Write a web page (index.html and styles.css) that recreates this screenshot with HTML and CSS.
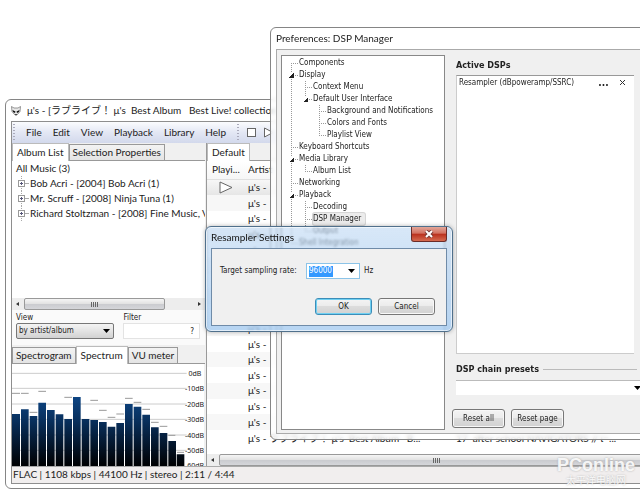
FILE: index.html
```html
<!DOCTYPE html>
<html lang="en">
<head>
    <meta charset="UTF-8">
    <meta name="viewport" content="width=device-width, initial-scale=1.0">
    <title>Preferences: DSP Manager</title>
    <link rel="stylesheet" href="styles.css">
</head>
<body>
    <main class="desktop">

        <!-- Player window -->
        <section class="window player">
            <header class="titlebar">
                <svg class="logo" viewBox="0 0 20 20">
                    <path d="M1 1 L6 4 L14 4 L19 1 L18 11 L12 18 L8 18 L2 11 Z" fill="#e8e8e8" stroke="#777" stroke-width="1.5"/>
                    <path d="M3 8 L9 11 L8 14 L4 12 Z M17 8 L11 11 L12 14 L16 12 Z M8 16 L12 16 L10 19 Z" fill="#111"/>
                </svg>
                <h1>μ's - [ラブライブ！ μ's&nbsp; Best Album&nbsp;&nbsp; Best Live! collection</h1>
            </header>
            <div class="frame">
                <nav class="menubar">
                    <i class="grip"></i>
                    <button>File</button>
                    <button>Edit</button>
                    <button>View</button>
                    <button>Playback</button>
                    <button>Library</button>
                    <button>Help</button>
                    <i class="grip"></i>
                    <div class="transport">
                        <button aria-label="Stop"><svg width="11" height="11" viewBox="0 0 11 11"><rect x="1.5" y="1.5" width="8" height="8" fill="#fff" stroke="#666"/></svg></button>
                        <button aria-label="Play"><svg width="11" height="11" viewBox="0 0 11 11"><path d="M1.5 1 L10 5.5 L1.5 10 Z" fill="#fff" stroke="#666"/></svg></button>
                    </div>
                </nav>
                <div class="panes">
                    <div class="side">
                        <div class="tabs">
                            <button class="tab active">Album List</button>
                            <button class="tab">Selection Properties</button>
                        </div>
                        <div class="albums">
                            <div>All Music (3)</div>
                            <ul>
                                <li>Bob Acri - [2004] Bob Acri (1)</li>
                                <li>Mr. Scruff - [2008] Ninja Tuna (1)</li>
                                <li>Richard Stoltzman - [2008] Fine Music, V</li>
                            </ul>
                        </div>
                        <div class="scrollbar side-scroll">
                            <svg viewBox="0 0 12 12"><path d="M7 4 L7 8 L4 6 Z"/></svg>
                            <div class="thumb"><i></i></div>
                            <svg viewBox="0 0 12 12"><path d="M5 4 L5 8 L8 6 Z"/></svg>
                        </div>
                        <div class="filters">
                            <div class="field">
                                <label for="view">View</label>
                                <select id="view"><option>by artist/album</option></select>
                            </div>
                            <div class="field">
                                <label for="filter">Filter</label>
                                <input id="filter" type="text" value="?">
                            </div>
                        </div>
                        <div class="tabs lower">
                            <button class="tab">Spectrogram</button>
                            <button class="tab active">Spectrum</button>
                            <button class="tab">VU meter</button>
                        </div>
                        <svg class="spectrum" viewBox="0 0 576 306">
                            <defs>
                                <linearGradient id="bar" gradientUnits="userSpaceOnUse" x1="0" y1="90" x2="0" y2="300">
                                    <stop offset="0" stop-color="#0d4788"/>
                                    <stop offset="0.4" stop-color="#082e5a"/>
                                    <stop offset="1" stop-color="#000205"/>
                                </linearGradient>
                            </defs>
                            <path d="M0 28H524M0 73H524M0 120H524M0 166H524M0 213H524M0 259H524" stroke="#ccc" stroke-width="3"/>
                            <path d="M0 88H24M27 88H50M53 145H76M79 82H102M157 100H180M235 109H258M261 139H284M287 160H310M313 150H336M339 103H362M365 115H388M391 136H414M417 175H440M443 187H466M469 214H490M495 265H516" stroke="#999" stroke-width="3"/>
                            <path fill="url(#bar)" d="M0 150h24V306H0zM27 136h23V306h-23zM53 156h23V306h-23zM79 116h23V306h-23zM105 138h23V306h-23zM131 151h23V306h-23zM157 165h23V306h-23zM183 99h23V306h-23zM209 165h23V306h-23zM235 168h23V306h-23zM261 174h23V306h-23zM287 188h23V306h-23zM313 177h23V306h-23zM339 120h23V306h-23zM365 128h23V306h-23zM391 152h23V306h-23zM417 190h23V306h-23zM443 207h23V306h-23zM469 231h23V306h-23zM494 271h23V306h-23z"/>
                            <g class="scale">
                                <text x="568" y="36">0dB</text>
                                <text x="576" y="81">-10dB</text>
                                <text x="576" y="128">-20dB</text>
                                <text x="576" y="174">-30dB</text>
                                <text x="576" y="221">-40dB</text>
                                <text x="576" y="267">-50dB</text>
                                <text x="576" y="313">-60dB</text>
                            </g>
                        </svg>
                    </div>

                    <div class="playlist">
                        <div class="tabs">
                            <button class="tab active">Default</button>
                        </div>
                        <div class="rows">
                            <table>
                                <thead>
                                    <tr><th class="state">Playi...</th><th class="artist">Artist</th><th></th></tr>
                                </thead>
                                <tbody>
                                    <tr class="current"><td class="state"><svg width="14" height="13" viewBox="0 0 14 13"><path d="M1 1 L13 6.5 L1 12 Z" fill="#fff" stroke="#666"/></svg></td><td>μ's -</td><td></td></tr>
                                    <tr><td></td><td>μ's -</td><td></td></tr>
                                    <tr><td></td><td>μ's -</td><td></td></tr>
                                    <tr><td></td><td>μ's -</td><td></td></tr>
                                    <tr><td></td><td>μ's -</td><td></td></tr>
                                    <tr><td></td><td>μ's -</td><td></td></tr>
                                    <tr><td></td><td>μ's -</td><td></td></tr>
                                    <tr><td></td><td>μ's -</td><td></td></tr>
                                    <tr><td></td><td>μ's -</td><td></td></tr>
                                    <tr><td></td><td>μ's -</td><td></td></tr>
                                    <tr><td></td><td>μ's -</td><td></td></tr>
                                    <tr><td></td><td>μ's -</td><td></td></tr>
                                    <tr><td></td><td>μ's -</td><td></td></tr>
                                    <tr><td></td><td>μ's -</td><td></td></tr>
                                    <tr><td></td><td>μ's -</td><td></td></tr>
                                    <tr><td></td><td>μ's -</td><td></td></tr>
                                    <tr><td></td><td>μ's - ラブライブ！ μ's&nbsp; Best Album&nbsp;&nbsp; B...</td><td>17&nbsp; after school NAVIGATORS // ί=...</td></tr>
                                </tbody>
                            </table>
                        </div>
                        <div class="scrollbar">
                            <svg viewBox="0 0 12 12"><path d="M7 4 L7 8 L4 6 Z"/></svg>
                            <div class="thumb"><i></i></div>
                        </div>
                    </div>
                </div>
                <footer class="status">FLAC | 1108 kbps | 44100 Hz | stereo | 2:11 / 4:44</footer>
            </div>
        </section>

        <!-- Preferences window -->
        <section class="window prefs">
            <header class="titlebar"><h2>Preferences: DSP Manager</h2></header>
            <div class="client">
                <div class="tree">
                    <ul>
                        <li><span>Components</span></li>
                        <li class="open"><span>Display</span>
                            <ul>
                                <li><span>Context Menu</span></li>
                                <li class="open"><span>Default User Interface</span>
                                    <ul>
                                        <li><span>Background and Notifications</span></li>
                                        <li><span>Colors and Fonts</span></li>
                                        <li><span>Playlist View</span></li>
                                    </ul>
                                </li>
                            </ul>
                        </li>
                        <li><span>Keyboard Shortcuts</span></li>
                        <li class="open"><span>Media Library</span>
                            <ul>
                                <li><span>Album List</span></li>
                            </ul>
                        </li>
                        <li><span>Networking</span></li>
                        <li class="open"><span>Playback</span>
                            <ul>
                                <li><span>Decoding</span></li>
                                <li><span class="selected">DSP Manager</span></li>
                                <li><span>Output</span></li>
                            </ul>
                        </li>
                        <li><span>Shell Integration</span></li>
                    </ul>
                </div>
                <div class="page">
                    <h3>Active DSPs</h3>
                    <div class="dsps">
                        <div class="dsp">
                            <span>Resampler (dBpoweramp/SSRC)</span>
                            <button aria-label="Configure">...</button>
                            <button aria-label="Remove"><svg width="7" height="7" viewBox="0 0 7 7"><path d="M1 1 L6 6 M6 1 L1 6" stroke="#333" fill="none"/></svg></button>
                        </div>
                    </div>
                    <h3 class="ruled"><label for="preset">DSP chain presets</label></h3>
                    <select id="preset"><option></option></select>
                    <div class="buttons">
                        <button class="push">Reset all</button>
                        <button class="push">Reset page</button>
                    </div>
                </div>
            </div>
        </section>

        <!-- Resampler dialog -->
        <section class="window dialog">
            <header class="titlebar">
                <h2>Resampler Settings</h2>
                <button class="close" aria-label="Close"><svg width="10" height="8" viewBox="0 0 10 8"><path d="M2 1 L8 7 M8 1 L2 7" stroke="#7a3a35" stroke-width="4"/><path d="M2 1 L8 7 M8 1 L2 7" stroke="#fff" stroke-width="2"/></svg></button>
            </header>
            <form class="client">
                <div class="rate">
                    <label for="rate">Target sampling rate:</label>
                    <div class="combo">
                        <input id="rate" type="text" value="96000">
                        <button type="button" aria-label="Show rates"><svg width="7" height="4" viewBox="0 0 7 4"><path d="M0 0 H7 L3.5 4 Z"/></svg></button>
                    </div>
                    <span>Hz</span>
                </div>
                <div class="actions">
                    <button type="button" class="push default">OK</button>
                    <button type="button" class="push">Cancel</button>
                </div>
            </form>
        </section>

        <div class="watermark">
            <strong>PConline</strong>
            <span>太平洋电脑网</span>
        </div>
    </main>
</body>
</html>
```
FILE: styles.css
```css
* {
    box-sizing: border-box;
}
body {
    margin: 0;
    background: #fff;
    color: #222;
    font-family: Lato, "Noto Sans CJK JP", sans-serif;
    font-size: 10px;
    line-height: 15px;
}
h1, h2, h3, ul {
    margin: 0;
    padding: 0;
    font-size: inherit;
    font-weight: normal;
    list-style: none;
}
button, input, select {
    margin: 0;
    padding: 0;
    border: none;
    background: none;
    color: inherit;
    font: inherit;
}
select {
    appearance: none;
}
.desktop {
    position: relative;
    height: 100vh;
    overflow: hidden;
}
.window {
    position: absolute;
    display: flex;
    flex-direction: column;
    border: 1px solid #858585;
    border-radius: 6px;
}
.titlebar {
    display: flex;
    align-items: center;
    height: 21px;
    white-space: nowrap;
}

/* Player */
.player {
    top: 99px;
    left: 5px;
    right: -20px;
    bottom: 0;
    padding: 0 5px 4px;
    background: #fff;
}
.logo {
    width: 10px;
    height: 10px;
    margin-right: 6px;
}
.frame {
    flex: 1;
    display: flex;
    flex-direction: column;
    min-height: 0;
    border: 1px solid #8e8e8e;
    background: #f0f0f0;
}
.menubar {
    display: flex;
    align-items: center;
    gap: 11px;
    height: 21px;
    padding-left: 1px;
    background: linear-gradient(#fbfcfe, #e3e7f4 50%, #d3d9ec);
}
.menubar button {
    line-height: 15px;
}
.menubar button svg {
    display: block;
}
.transport {
    display: flex;
    gap: 6px;
    margin-left: -4px;
}
.grip {
    width: 2px;
    height: 17px;
    background: repeating-linear-gradient(#aab 0 1px, transparent 1px 3px);
}
.panes {
    flex: 1;
    display: flex;
    gap: 1px;
    min-height: 0;
}
.side {
    width: 193px;
    display: flex;
    flex-direction: column;
}
.tabs {
    display: flex;
    align-items: flex-end;
    height: 18px;
    border-bottom: 1px solid #999;
}
.tab {
    height: 16px;
    padding: 0 3px;
    border: 1px solid #999;
    border-bottom: none;
    background: linear-gradient(#f3f3f3, #e4e4e4);
    line-height: 15px;
    white-space: nowrap;
}
.tab.active {
    height: 18px;
    margin-bottom: -1px;
    padding: 0 4px;
    border-color: #bbb;
    background: #fff;
}
.lower {
    height: 19px;
}
.albums {
    flex: 1;
    padding-left: 4px;
    overflow: hidden;
    background: #fff;
    white-space: nowrap;
}
.albums li {
    padding-left: 14px;
    background:
        linear-gradient(#557, #557) 4px 7px / 3px 1px no-repeat,
        linear-gradient(#557, #557) 5px 6px / 1px 3px no-repeat,
        linear-gradient(#fff, #fff) 3px 5px / 5px 5px no-repeat,
        linear-gradient(#999, #999) 2px 4px / 7px 7px no-repeat,
        linear-gradient(90deg, #aaa, #aaa) 9px 7px / 4px 1px no-repeat,
        repeating-linear-gradient(#aaa 0 1px, transparent 1px 2px) 5px 0 / 1px 100% no-repeat;
}
.scrollbar {
    display: flex;
    height: 12px;
    background: #ededed;
}
.scrollbar svg {
    width: 12px;
    height: 12px;
    fill: #333;
}
.thumb {
    flex: 1;
    display: flex;
    align-items: center;
    justify-content: center;
    border: 1px solid #999;
    border-radius: 2px;
    background: linear-gradient(#f5f5f5, #e3e3e3 45%, #cbccd0 55%, #d5d6da);
}
.thumb i {
    width: 7px;
    height: 5px;
    background: repeating-linear-gradient(90deg, #666 0 1px, transparent 1px 2px);
}
.side-scroll .thumb {
    margin-right: 28px;
}
.filters {
    display: flex;
    gap: 9px;
    padding: 3px 5px 6px 4px;
    background: #fafafa;
}
.field {
    display: flex;
    flex-direction: column;
    flex: 7;
    font: 8px/10px "DejaVu Sans Condensed", sans-serif;
}
.field:first-child {
    flex: 9;
}
.field select, .field input {
    width: 100%;
    height: 16px;
}
.field select {
    padding-left: 2px;
    border: 1px solid #777;
    border-radius: 2px;
    background:
        url("data:image/svg+xml,%3Csvg xmlns='http://www.w3.org/2000/svg' width='7' height='4'%3E%3Cpath d='M0 0H7L3.5 4Z'/%3E%3C/svg%3E") right 3px center no-repeat,
        linear-gradient(#f4f4f4, #d2d2d2);
}
.field input {
    padding-right: 5px;
    border: 1px solid #e3e3e3;
    background: #fff;
    text-align: right;
}
.spectrum {
    display: block;
    width: 192px;
    height: 102px;
    background: #fff;
}
.scale text {
    font: 21px "Noto Sans", sans-serif;
    text-anchor: end;
    fill: #222;
}
.playlist {
    flex: 1;
    display: flex;
    flex-direction: column;
    min-width: 0;
    border-left: 1px solid #999;
}
.rows {
    flex: 1;
    overflow: hidden;
    background: #fff;
}
.rows table {
    width: 100%;
    height: 285px;
    border-collapse: collapse;
    table-layout: fixed;
}
.rows th, .rows td {
    padding: 0;
    line-height: 13px;
    font-weight: normal;
    text-align: left;
    white-space: nowrap;
    overflow: hidden;
}
.rows th {
    height: 18px;
    border-bottom: 1px solid #e0e0e0;
    background: linear-gradient(#fff, #f6f6f6);
}
.rows .state {
    width: 41px;
    padding-left: 5px;
}
.rows td.state {
    padding-left: 12px;
}
.rows .artist {
    width: 208px;
}
.rows svg {
    display: block;
}
.rows tbody tr:nth-child(even) {
    background: #f7f7f7;
}
.rows tbody .current {
    background: linear-gradient(#f8f8f8, #e6e6e6);
}
.status {
    height: 17px;
    padding-left: 1px;
    border-top: 1px solid #aaa;
    background: #f1eeee;
    white-space: pre;
}

/* Preferences */
.prefs {
    top: 27px;
    left: 270px;
    right: -12px;
    height: 413px;
    padding: 0 5px 5px;
    background: rgba(255, 255, 255, 0.75);
    backdrop-filter: blur(2px);
    font: 8px/12px "DejaVu Sans Condensed", sans-serif;
}
.prefs .titlebar, .dialog .titlebar {
    font: 10px/15px Lato, sans-serif;
}
.prefs .client {
    flex: 1;
    display: flex;
    gap: 8px;
    padding: 5px 4px 3px;
    border: 1px solid #aaa;
    background: #f0f0f0;
}
.tree {
    width: 164px;
    padding: 1px 4px;
    border: 1px solid #888;
    background: #fff;
    white-space: nowrap;
}
.tree ul ul {
    padding-left: 14px;
    margin-left: -13px;
}
.tree li {
    padding-left: 13px;
    background:
        repeating-linear-gradient(90deg, #999 0 1px, transparent 1px 2px) 5px 6px / 7px 1px no-repeat,
        repeating-linear-gradient(#999 0 1px, transparent 1px 2px) 5px 0 / 1px 100% no-repeat;
}
.tree > ul > li:first-child {
    background-position: 5px 6px;
}
.tree li:last-child {
    background-size: 7px 1px, 1px 6px;
}
.tree .open {
    background:
        linear-gradient(135deg, transparent 50%, #222 50%) 3px 4px / 5px 5px no-repeat,
        linear-gradient(#fff, #fff) 2px 3px / 7px 7px no-repeat,
        repeating-linear-gradient(90deg, #999 0 1px, transparent 1px 2px) 5px 6px / 7px 1px no-repeat,
        repeating-linear-gradient(#999 0 1px, transparent 1px 2px) 5px 0 / 1px 100% no-repeat;
}
.tree .open:last-child {
    background-size: 5px 5px, 7px 7px, 7px 1px, 1px 6px;
}
.tree span {
    display: block;
    width: fit-content;
    height: 12px;
}
.tree .selected {
    padding-right: 4px;
    border-radius: 2px;
    background: #ececec;
    box-shadow: 0 0 0 1px #d5d5d5;
}
.page {
    flex: 1;
    display: flex;
    flex-direction: column;
    padding: 2px 4px 2px 3px;
}
.page h3 {
    font-size: 9px;
    font-weight: bold;
    line-height: 16px;
}
.dsps {
    flex: 1;
    margin: 2px 3px 7px 0;
    padding: 1px 2px;
    border: 1px solid #ccc;
    border-top-color: #999;
    border-right: none;
    background: #fff;
}
.dsp {
    display: flex;
    align-items: center;
    white-space: nowrap;
}
.dsp span {
    flex: 1;
}
.dsp button {
    width: 19px;
    font-size: 10px;
    font-weight: bold;
}
.ruled {
    display: flex;
    align-items: center;
    gap: 4px;
}
.ruled::after {
    content: "";
    flex: 1;
    height: 1px;
    background: #bbb;
}
.page select {
    height: 15px;
    margin: 3px -4px 14px 0;
    border-top: 1px solid #bbb;
    background: #fff url("data:image/svg+xml,%3Csvg xmlns='http://www.w3.org/2000/svg' width='7' height='4'%3E%3Cpath d='M0 0H7L3.5 4Z'/%3E%3C/svg%3E") right center no-repeat;
}
.buttons {
    display: flex;
    gap: 6px;
    margin-left: -4px;
}
.push {
    min-width: 53px;
    height: 19px;
    padding: 0 3px;
    border: 1px solid #777;
    border-radius: 3px;
    background: linear-gradient(#f4f4f4, #ebebeb 50%, #dcdcdc 50%, #d2d2d2);
    box-shadow: inset 0 0 0 1px #f8f8f8;
}

/* Resampler dialog */
.dialog {
    top: 226px;
    left: 205px;
    width: 248px;
    padding: 0 5px 5px;
    border-color: #50708c;
    background: linear-gradient(rgba(190, 216, 243, 0.6), rgba(165, 203, 240, 0.8));
    backdrop-filter: blur(1px);
    box-shadow: inset 0 0 0 1px rgba(255, 255, 255, 0.6), 0 0 4px rgba(0, 0, 0, 0.3);
    font: 8px/12px "DejaVu Sans Condensed", sans-serif;
}
.dialog .titlebar {
    justify-content: space-between;
    color: #111;
}
.close {
    display: flex;
    align-items: center;
    justify-content: center;
    align-self: flex-start;
    width: 36px;
    height: 15px;
    border: 1px solid #6b2c28;
    border-top: none;
    border-radius: 0 0 3px 3px;
    background: linear-gradient(#e2a79a, #d2705f 45%, #b92f1c 50%, #d56b50);
}
.dialog .client {
    display: flex;
    flex-direction: column;
    gap: 19px;
    padding: 14px 11px 10px 8px;
    border: 1px solid #6f8ba8;
    background: #f0f0f0;
}
.rate {
    display: flex;
    align-items: center;
}
.rate label {
    width: 86px;
}
.combo {
    display: flex;
    align-items: center;
    justify-content: space-between;
    width: 54px;
    height: 16px;
    margin-right: 4px;
    padding: 0 4px 0 2px;
    border: 1px solid #8cc4e8;
    background: #fff;
}
.combo input {
    width: 24px;
    height: 11px;
    background: #3399ff;
    color: #fff;
}
.combo button svg {
    display: block;
}
.actions {
    display: flex;
    justify-content: flex-end;
    gap: 6px;
}
.actions .push {
    min-width: 57px;
    height: 17px;
}
.push.default {
    border-color: #3c8db8;
    box-shadow: inset 0 0 0 1px #6fd0f2;
}

.watermark {
    position: absolute;
    right: 5px;
    bottom: 3px;
    display: flex;
    flex-direction: column;
    align-items: center;
    color: rgba(255, 255, 255, 0.9);
    text-shadow: 0 0 2px #aaa;
    pointer-events: none;
}
.watermark strong {
    font: bold 18px/18px "Liberation Sans", sans-serif;
}
.watermark span {
    font: 10px/12px "Noto Sans CJK SC", sans-serif;
}
```
